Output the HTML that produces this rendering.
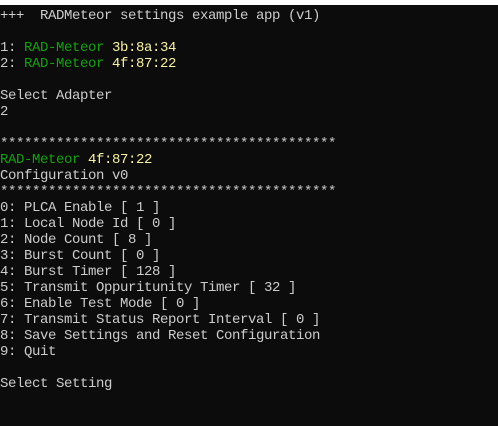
<!DOCTYPE html>
<html><head><meta charset="utf-8"><style>
html,body{margin:0;padding:0;}
body{width:498px;height:426px;background:#0c0c0c;overflow:hidden;position:relative;}
.top{position:absolute;left:0;top:0;width:498px;height:5px;background:#fff;}
pre{position:absolute;left:0;top:8px;margin:0;font-family:"Liberation Mono",monospace;font-size:14px;line-height:16px;color:#cccccc;letter-spacing:-0.4px;}
.g{color:#13a10e}.y{color:#f9f1a5}
</style></head><body><div class="top"></div><pre>+++  RADMeteor settings example app (v1)

1: <span class="g">RAD-Meteor</span> <span class="y">3b:8a:34</span>
2: <span class="g">RAD-Meteor</span> <span class="y">4f:87:22</span>

Select Adapter
2

******************************************
<span class="g">RAD-Meteor</span> <span class="y">4f:87:22</span>
Configuration v0
******************************************
0: PLCA Enable [ 1 ]
1: Local Node Id [ 0 ]
2: Node Count [ 8 ]
3: Burst Count [ 0 ]
4: Burst Timer [ 128 ]
5: Transmit Oppuritunity Timer [ 32 ]
6: Enable Test Mode [ 0 ]
7: Transmit Status Report Interval [ 0 ]
8: Save Settings and Reset Configuration
9: Quit

Select Setting</pre></body></html>
